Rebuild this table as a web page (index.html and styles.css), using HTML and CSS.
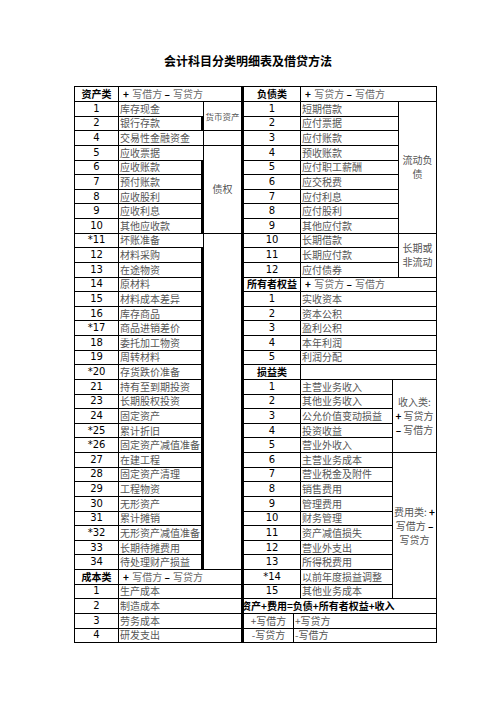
FILE: index.html
```html
<!DOCTYPE html>
<html lang="zh-CN">
<head>
<meta charset="utf-8">
<title>会计科目分类明细表及借贷方法</title>
<link rel="stylesheet" href="styles.css">
</head>
<body>
<div class="page">
  <h1 class="title">会计科目分类明细表及借贷方法</h1>
  <div class="sheet">
    <table class="tbl left">
      <colgroup><col class="c-l1"><col class="c-l2"><col class="c-l3"></colgroup>
      <tr class="hd"><td class="cat">资产类</td><td class="hint" colspan="2"><b>+</b> 写借方 <b>–</b> 写贷方</td></tr>
      <tr><td class="num">1</td><td class="nm">库存现金</td><td class="grp sm" rowspan="2">货币资产</td></tr>
      <tr><td class="num">2</td><td class="nm">银行存款</td></tr>
      <tr><td class="num">4</td><td class="nm">交易性金融资金</td><td class="grp"></td></tr>
      <tr><td class="num">5</td><td class="nm">应收票据</td><td class="grp" rowspan="6">债权</td></tr>
      <tr><td class="num">6</td><td class="nm">应收账款</td></tr>
      <tr><td class="num">7</td><td class="nm">预付账款</td></tr>
      <tr><td class="num">8</td><td class="nm">应收股利</td></tr>
      <tr><td class="num">9</td><td class="nm">应收利息</td></tr>
      <tr><td class="num">10</td><td class="nm">其他应收款</td></tr>
      <tr><td class="num">*11</td><td class="nm">坏账准备</td><td class="grp" rowspan="23"></td></tr>
      <tr><td class="num">12</td><td class="nm">材料采购</td></tr>
      <tr><td class="num">13</td><td class="nm">在途物资</td></tr>
      <tr><td class="num">14</td><td class="nm">原材料</td></tr>
      <tr><td class="num">15</td><td class="nm">材料成本差异</td></tr>
      <tr><td class="num">16</td><td class="nm">库存商品</td></tr>
      <tr><td class="num">*17</td><td class="nm">商品进销差价</td></tr>
      <tr><td class="num">18</td><td class="nm">委托加工物资</td></tr>
      <tr><td class="num">19</td><td class="nm">周转材料</td></tr>
      <tr><td class="num">*20</td><td class="nm">存货跌价准备</td></tr>
      <tr><td class="num">21</td><td class="nm">持有至到期投资</td></tr>
      <tr><td class="num">23</td><td class="nm">长期股权投资</td></tr>
      <tr><td class="num">24</td><td class="nm">固定资产</td></tr>
      <tr><td class="num">*25</td><td class="nm">累计折旧</td></tr>
      <tr><td class="num">*26</td><td class="nm">固定资产减值准备</td></tr>
      <tr><td class="num">27</td><td class="nm">在建工程</td></tr>
      <tr><td class="num">28</td><td class="nm">固定资产清理</td></tr>
      <tr><td class="num">29</td><td class="nm">工程物资</td></tr>
      <tr><td class="num">30</td><td class="nm">无形资产</td></tr>
      <tr><td class="num">31</td><td class="nm">累计摊销</td></tr>
      <tr><td class="num">*32</td><td class="nm">无形资产减值准备</td></tr>
      <tr><td class="num">33</td><td class="nm">长期待摊费用</td></tr>
      <tr><td class="num">34</td><td class="nm">待处理财产损益</td></tr>
      <tr><td class="cat">成本类</td><td class="hint" colspan="2"><b>+</b> 写借方 <b>–</b> 写贷方</td></tr>
      <tr><td class="num">1</td><td class="nm" colspan="2">生产成本</td></tr>
      <tr><td class="num">2</td><td class="nm" colspan="2">制造成本</td></tr>
      <tr><td class="num">3</td><td class="nm" colspan="2">劳务成本</td></tr>
      <tr><td class="num">4</td><td class="nm" colspan="2">研发支出</td></tr>
    </table>

    <div class="right">
      <table class="tbl ra">
        <colgroup><col class="c-r1"><col class="c-a2"><col class="c-a3"></colgroup>
        <tr class="hd"><td class="cat">负债类</td><td class="hint" colspan="2"><b>+</b> 写贷方 <b>–</b> 写借方</td></tr>
        <tr><td class="num">1</td><td class="nm">短期借款</td><td class="grp" rowspan="9">流动负<br>债</td></tr>
        <tr><td class="num">2</td><td class="nm">应付票据</td></tr>
        <tr><td class="num">3</td><td class="nm">应付账款</td></tr>
        <tr><td class="num">4</td><td class="nm">预收账款</td></tr>
        <tr><td class="num">5</td><td class="nm">应付职工薪酬</td></tr>
        <tr><td class="num">6</td><td class="nm">应交税费</td></tr>
        <tr><td class="num">7</td><td class="nm">应付利息</td></tr>
        <tr><td class="num">8</td><td class="nm">应付股利</td></tr>
        <tr><td class="num">9</td><td class="nm">其他应付款</td></tr>
        <tr><td class="num">10</td><td class="nm">长期借款</td><td class="grp" rowspan="3">长期或<br>非流动</td></tr>
        <tr><td class="num">11</td><td class="nm">长期应付款</td></tr>
        <tr><td class="num">12</td><td class="nm">应付债券</td></tr>
        <tr><td class="cat">所有者权益</td><td class="hint" colspan="2"><b>+</b> 写贷方 <b>–</b> 写借方</td></tr>
        <tr><td class="num">1</td><td class="nm" colspan="2">实收资本</td></tr>
        <tr><td class="num">2</td><td class="nm" colspan="2">资本公积</td></tr>
        <tr><td class="num">3</td><td class="nm" colspan="2">盈利公积</td></tr>
        <tr><td class="num">4</td><td class="nm" colspan="2">本年利润</td></tr>
        <tr><td class="num">5</td><td class="nm" colspan="2">利润分配</td></tr>
      </table>

      <table class="tbl rb">
        <colgroup><col class="c-r1"><col class="c-b2"><col class="c-b3"></colgroup>
        <tr><td class="cat">损益类</td><td colspan="2"></td></tr>
        <tr><td class="num">1</td><td class="nm">主营业务收入</td><td class="grp" rowspan="5">收入类:<br><b>+</b> 写贷方<br><b>–</b> 写借方</td></tr>
        <tr><td class="num">2</td><td class="nm">其他业务收入</td></tr>
        <tr><td class="num">3</td><td class="nm">公允价值变动损益</td></tr>
        <tr><td class="num">4</td><td class="nm">投资收益</td></tr>
        <tr><td class="num">5</td><td class="nm">营业外收入</td></tr>
        <tr><td class="num">6</td><td class="nm">主营业务成本</td><td class="grp" rowspan="10">费用类: <b>+</b><br>写借方 <b>–</b><br>写贷方</td></tr>
        <tr><td class="num">7</td><td class="nm">营业税金及附件</td></tr>
        <tr><td class="num">8</td><td class="nm">销售费用</td></tr>
        <tr><td class="num">9</td><td class="nm">管理费用</td></tr>
        <tr><td class="num">10</td><td class="nm">财务管理</td></tr>
        <tr><td class="num">11</td><td class="nm">资产减值损失</td></tr>
        <tr><td class="num">12</td><td class="nm">营业外支出</td></tr>
        <tr><td class="num">13</td><td class="nm">所得税费用</td></tr>
        <tr><td class="num">*14</td><td class="nm">以前年度损益调整</td></tr>
        <tr><td class="num">15</td><td class="nm">其他业务成本</td></tr>
      </table>

      <table class="tbl rc">
        <colgroup><col class="c-c1"><col class="c-c2"></colgroup>
        <tr><td class="eq" colspan="2"><span>资产+费用=负债+所有者权益+收入</span></td></tr>
        <tr><td class="rule">+写借方</td><td class="nm">+写贷方</td></tr>
        <tr><td class="rule">-写贷方</td><td class="nm">-写借方</td></tr>
      </table>
    </div>
  </div>
</div>
</body>
</html>
```

FILE: styles.css
```css
* {
  box-sizing: border-box;
}

body {
  margin: 0;
  background: #ffffff;
  font-family: "Noto Sans CJK SC", "DejaVu Sans", sans-serif;
  color: #000;
}

.page {
  padding-top: 53px;
}

.title {
  margin: 0 0 17px;
  text-align: center;
  font-size: 12px;
  line-height: 16px;
  font-weight: bold;
}

.sheet {
  display: flex;
  align-items: flex-start;
  margin-left: 74px;
}

.right {
  display: flex;
  flex-direction: column;
}

.tbl {
  border-collapse: separate;
  border-spacing: 0;
  table-layout: fixed;
}

.tbl td {
  padding: 0;
  border-right: 1px solid #000;
  border-bottom: 1px solid #000;
  font-size: 10px;
  line-height: 12px;
  white-space: nowrap;
  overflow: visible;
  vertical-align: middle;
}

.tbl tr {
  height: 14.63px;
}

.tbl tr.hd {
  height: 15px;
}

.left {
  width: 169px;
  border-top: 1px solid #000;
  border-left: 1px solid #000;
}

.left td:last-child,
.left .grp {
  border-right-width: 3px;
}

.c-l1 { width: 44px; }
.c-l2 { width: 85px; }
.c-l3 { width: 40px; }

.ra, .rb, .rc {
  width: 193px;
}

.ra {
  border-top: 1px solid #000;
}

.c-r1 { width: 57px; }
.c-a2 { width: 98px; }
.c-a3 { width: 38px; }
.c-b2 { width: 92px; }
.c-b3 { width: 44px; }
.c-c1 { width: 50px; }
.c-c2 { width: 143px; }

.num {
  text-align: center;
  font-family: "DejaVu Sans", sans-serif;
  font-size: 9.5px;
  color: #000;
}

.nm {
  padding-left: 1px !important;
  color: #555;
}

.cat {
  text-align: center;
  font-weight: bold;
  color: #000;
}

.hint {
  padding-left: 4px !important;
  font-size: 9px;
  color: #6a6a6a;
}

.hint b {
  font-size: 10px;
  color: #000;
  margin-right: 1px;
}

.grp {
  text-align: center;
  color: #555;
  line-height: 14px !important;
}

.grp b {
  font-weight: bold;
  color: #000;
}

.grp.sm {
  font-size: 8.5px;
}

.eq {
  font-size: 11.5px;
  font-weight: bold;
  color: #000;
}

.eq span {
  margin-left: -3px;
}

.rule {
  text-align: center;
  color: #555;
}
```
